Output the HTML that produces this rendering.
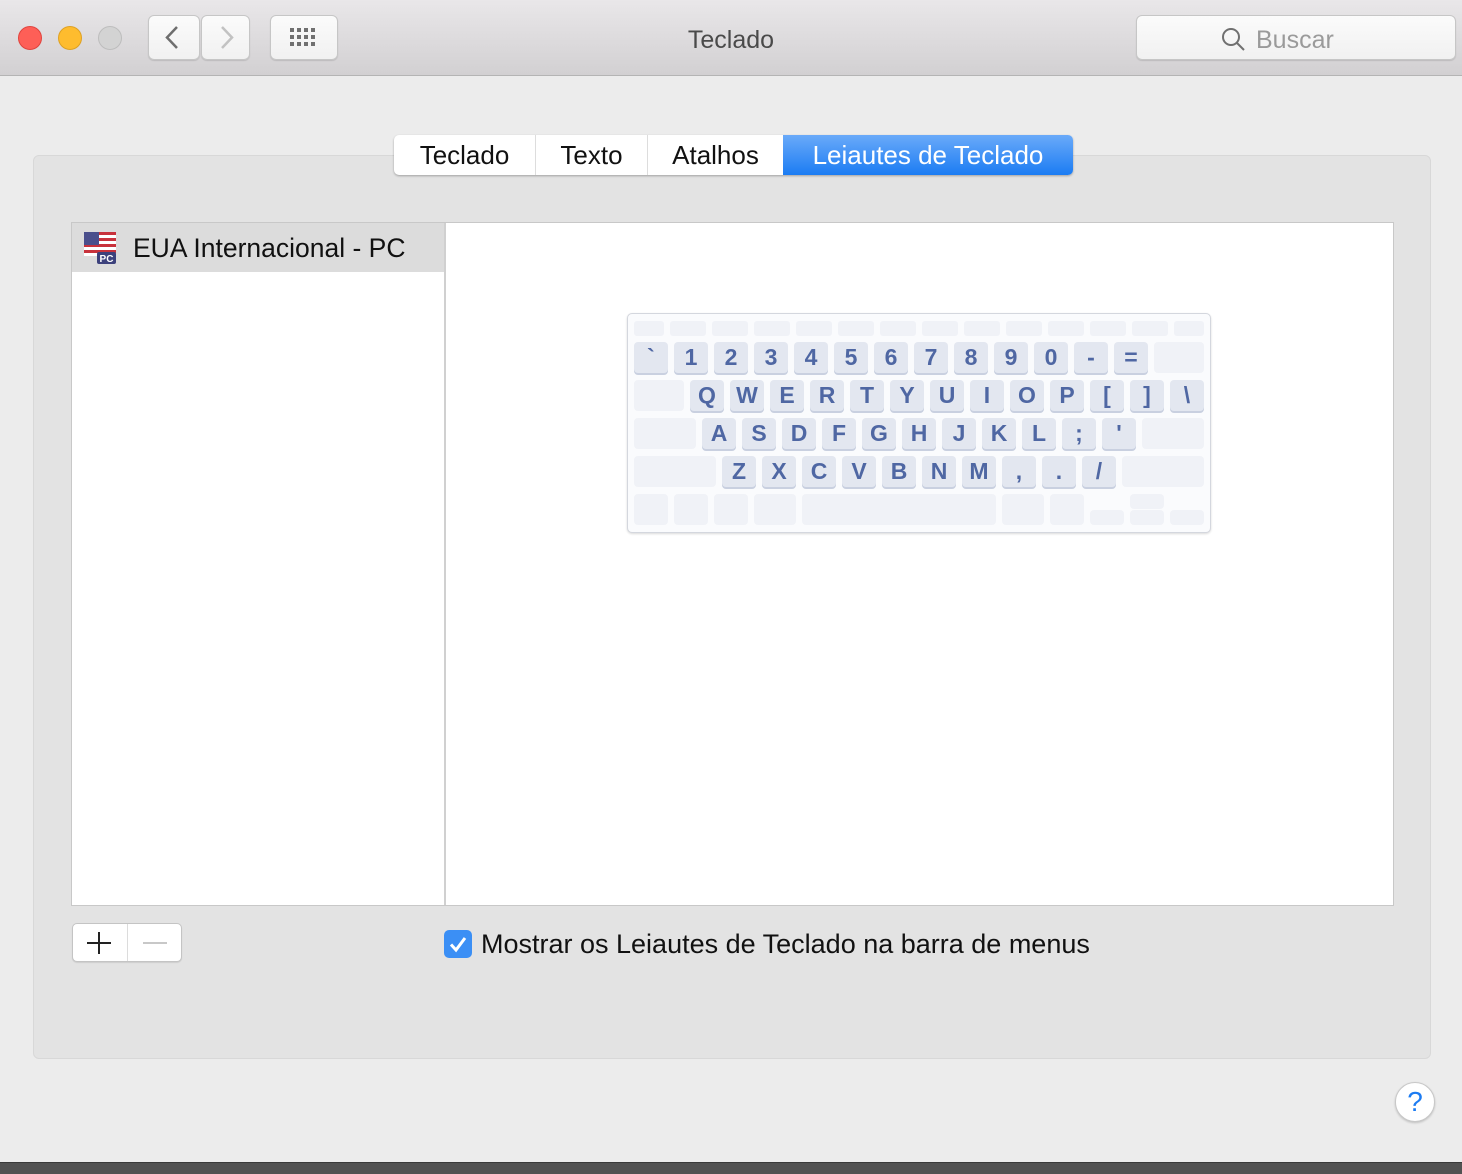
<!DOCTYPE html>
<html><head><meta charset="utf-8"><style>
*{box-sizing:border-box;margin:0;padding:0}
body{width:1462px;height:1174px;background:#ececec;font-family:"Liberation Sans",sans-serif;position:relative;overflow:hidden}
.abs{position:absolute}
.tb{left:0;top:0;width:1462px;height:76px;background:linear-gradient(#e9e7e9,#d2d0d2);border-bottom:1px solid #b4b4b4}
.dot{width:24px;height:24px;border-radius:50%;top:26px}
.btn{background:linear-gradient(#fbfbfb,#f1f1f1);border:1px solid #c6c6c6;border-radius:6px;box-shadow:0 1px 1px rgba(0,0,0,.12)}
.k,.e{position:absolute;border-radius:4px;height:31px}
.e{background:#f0f2f7}
.k{background:#e3e7f0;box-shadow:0 2px 0 #c9d0e0;color:#4f67a3;font-weight:bold;font-size:23px;text-align:center;line-height:31px}
.f{position:absolute;top:321px;height:15px;border-radius:3px;background:#f0f2f7}
</style></head><body>
<div class="abs tb"></div>
<div class="abs dot" style="left:18px;background:#fe5f57;border:1px solid #e0443e"></div>
<div class="abs dot" style="left:58px;background:#febc2e;border:1px solid #dea123"></div>
<div class="abs dot" style="left:98px;background:#d3d3d3;border:1px solid #bdbdbd"></div>
<div class="abs btn" style="left:148px;top:15px;width:52px;height:45px"><svg width="50" height="43"><path d="M28 11 L18 21.5 L28 32" stroke="#6e6e6e" stroke-width="2.5" fill="none"/></svg></div>
<div class="abs btn" style="left:201px;top:15px;width:49px;height:45px"><svg width="47" height="43"><path d="M20 11 L30 21.5 L20 32" stroke="#c2c2c2" stroke-width="2.5" fill="none"/></svg></div>
<div class="abs btn" style="left:270px;top:15px;width:68px;height:45px"><svg width="66" height="43"><g fill="#707070"><rect x="19" y="12" width="4" height="4"/><rect x="26" y="12" width="4" height="4"/><rect x="33" y="12" width="4" height="4"/><rect x="40" y="12" width="4" height="4"/><rect x="19" y="19" width="4" height="4"/><rect x="26" y="19" width="4" height="4"/><rect x="33" y="19" width="4" height="4"/><rect x="40" y="19" width="4" height="4"/><rect x="19" y="26" width="4" height="4"/><rect x="26" y="26" width="4" height="4"/><rect x="33" y="26" width="4" height="4"/><rect x="40" y="26" width="4" height="4"/></g></svg></div>
<div class="abs" style="left:0;width:1462px;top:26px;text-align:center;font-size:25px;color:#4a4a4a">Teclado</div>
<div class="abs btn" style="left:1136px;top:15px;width:320px;height:45px;border-radius:6px"></div>
<svg class="abs" style="left:1220px;top:26px" width="28" height="28"><circle cx="11" cy="11" r="8" stroke="#707070" stroke-width="2" fill="none"/><path d="M17 17 L24 24" stroke="#707070" stroke-width="2"/></svg>
<div class="abs" style="left:1256px;top:26px;font-size:25px;color:#9a9a9a">Buscar</div>

<div class="abs" style="left:33px;top:155px;width:1398px;height:904px;background:#e3e3e3;border:1px solid #d8d8d8;border-radius:6px"></div>
<div class="abs" style="left:394px;top:135px;width:679px;height:40px;background:#fff;border-radius:5px;box-shadow:0 1px 2px rgba(0,0,0,.3);overflow:hidden;font-size:26px;color:#111">
<div class="abs" style="left:0;width:142px;height:40px;line-height:40px;text-align:center;border-right:1px solid #ddd">Teclado</div>
<div class="abs" style="left:142px;width:112px;height:40px;line-height:40px;text-align:center;border-right:1px solid #ddd">Texto</div>
<div class="abs" style="left:254px;width:135px;height:40px;line-height:40px;text-align:center">Atalhos</div>
<div class="abs" style="left:389px;width:290px;height:40px;line-height:40px;text-align:center;color:#fff;background:linear-gradient(#6aaaf9,#1b7cf3)">Leiautes de Teclado</div>
</div>

<div class="abs" style="left:71px;top:222px;width:1323px;height:684px;background:#fff;border:1px solid #c8c8c8"></div>
<div class="abs" style="left:444px;top:223px;width:2px;height:682px;background:#d0d0d0"></div>
<div class="abs" style="left:72px;top:223px;width:372px;height:49px;background:#dcdcdc"></div>
<svg class="abs" style="left:84px;top:232px" width="33" height="32"><rect x="0" y="0" width="32" height="24" fill="#fff"/><g fill="#c8323c"><rect y="0" width="32" height="3"/><rect y="6" width="32" height="3"/><rect y="12" width="32" height="3"/><rect y="18" width="32" height="3"/></g><rect x="0" y="0" width="15" height="13" fill="#4a4f8c"/><rect x="13" y="20" width="19" height="12" rx="2" fill="#3c417c"/><text x="22.5" y="30" font-size="10" font-weight="bold" fill="#fff" text-anchor="middle" font-family="Liberation Sans">PC</text></svg>
<div class="abs" style="left:133px;top:233px;font-size:26.5px;color:#111">EUA Internacional - PC</div>

<div class="abs" style="left:627px;top:313px;width:584px;height:220px;background:#fafbfd;border:1px solid #d4d7de;border-radius:5px;box-shadow:0 1px 2px rgba(0,0,0,.15)"></div>
<div id="kb"></div>
<script>
(function(){var h='';
function e(x,y,w){h+='<div class="e" style="left:'+x+'px;top:'+y+'px;width:'+w+'px"></div>';}
function k(x,y,t){h+='<div class="k" style="left:'+x+'px;top:'+y+'px;width:34px">'+t+'</div>';}
var fx=[634,670,712,754,796,838,880,922,964,1006,1048,1090,1132,1174];
fx.forEach(function(x,i){var w=(i==0?30:36);if(i==13)w=30;h+='<div class="f" style="left:'+x+'px;width:'+w+'px"></div>';});
"`1234567890-=".split('').forEach(function(c,i){k(634+i*40,342,c);});e(1154,342,50);
e(634,380,50);"QWERTYUIOP[]\\".split('').forEach(function(c,i){k(690+i*40,380,c);});
e(634,418,62);"ASDFGHJKL;'".split('').forEach(function(c,i){k(702+i*40,418,c);});e(1142,418,62);
e(634,456,82);"ZXCVBNM,./".split('').forEach(function(c,i){k(722+i*40,456,c);});e(1122,456,82);
e(634,494,34);e(674,494,34);e(714,494,34);e(754,494,42);e(802,494,194);e(1002,494,42);e(1050,494,34);
h+='<div class="e" style="left:1090px;top:510px;width:34px;height:15px"></div>';
h+='<div class="e" style="left:1130px;top:494px;width:34px;height:15px"></div>';
h+='<div class="e" style="left:1130px;top:510px;width:34px;height:15px"></div>';
h+='<div class="e" style="left:1170px;top:510px;width:34px;height:15px"></div>';
document.getElementById('kb').innerHTML=h;})();
</script>

<div class="abs" style="left:72px;top:923px;width:110px;height:39px;background:#fff;border:1px solid #c4c4c4;border-radius:5px;box-shadow:0 1px 1px rgba(0,0,0,.1)"></div>
<div class="abs" style="left:127px;top:924px;width:1px;height:37px;background:#dcdcdc"></div>
<svg class="abs" style="left:86px;top:931px" width="26" height="24"><path d="M13 1V23M1 12H25" stroke="#222" stroke-width="2"/></svg>
<svg class="abs" style="left:142px;top:931px" width="26" height="24"><path d="M1 12H25" stroke="#c8c8c8" stroke-width="2"/></svg>
<div class="abs" style="left:444px;top:930px;width:28px;height:28px;border-radius:5px;background:#3b8ff5"><svg width="28" height="28"><path d="M7 14.5 L12 20 L21 8" stroke="#fff" stroke-width="3" fill="none"/></svg></div>
<div class="abs" style="left:481px;top:929px;font-size:27px;color:#111">Mostrar os Leiautes de Teclado na barra de menus</div>

<div class="abs" style="left:1395px;top:1082px;width:40px;height:40px;border-radius:50%;background:#fff;border:1px solid #c8c8c8;box-shadow:0 1px 2px rgba(0,0,0,.2);text-align:center;line-height:38px;font-size:28px;color:#1d7cf2">?</div>
<div class="abs" style="left:0;top:1162px;width:1462px;height:12px;background:#525252;border-top:1px solid #3a3a3a"></div>
</body></html>
